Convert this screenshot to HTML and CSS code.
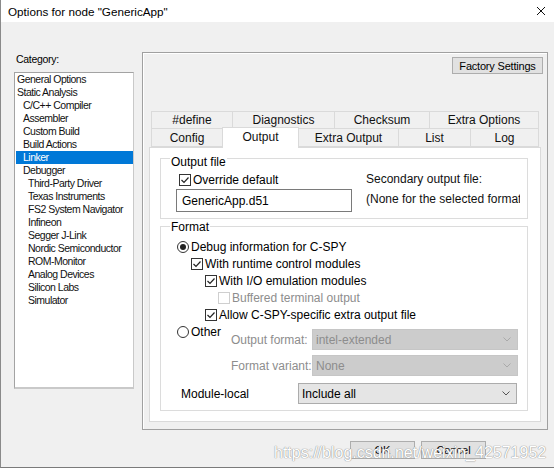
FILE: index.html
```html
<!DOCTYPE html>
<html>
<head>
<meta charset="utf-8">
<link rel="stylesheet" href="styles.css">
</head>
<body>
<div class="window">
  <div class="titlebar">
    <span class="title">Options for node "GenericApp"</span>
    <svg class="close" width="10" height="10" viewBox="0 0 10 10"><path d="M1 1L9 9M9 1L1 9" stroke="#111" stroke-width="1"/></svg>
  </div>
  <div class="client">
    <div class="main">
      <div class="category">
        <div class="cat-label">Category:</div>
        <div class="cat-list">
          <div class="item l0">General Options</div>
          <div class="item l0">Static Analysis</div>
          <div class="item l1">C/C++ Compiler</div>
          <div class="item l1">Assembler</div>
          <div class="item l1">Custom Build</div>
          <div class="item l1">Build Actions</div>
          <div class="item l1 selected">Linker</div>
          <div class="item l1">Debugger</div>
          <div class="item l2">Third-Party Driver</div>
          <div class="item l2">Texas Instruments</div>
          <div class="item l2">FS2 System Navigator</div>
          <div class="item l2">Infineon</div>
          <div class="item l2">Segger J-Link</div>
          <div class="item l2">Nordic Semiconductor</div>
          <div class="item l2">ROM-Monitor</div>
          <div class="item l2">Analog Devices</div>
          <div class="item l2">Silicon Labs</div>
          <div class="item l2">Simulator</div>
        </div>
      </div>
      <div class="panel">
        <div class="panel-top"><div class="btn factory">Factory Settings</div></div>
        <div class="tabs">
          <div class="tab-row row1">
            <div class="tab w-define">#define</div>
            <div class="tab w-diag">Diagnostics</div>
            <div class="tab w-check">Checksum</div>
            <div class="tab w-extra">Extra Options</div>
          </div>
          <div class="tab-row row2">
            <div class="tab w-config">Config</div>
            <div class="tab w-output active">Output</div>
            <div class="tab w-extraout">Extra Output</div>
            <div class="tab w-list">List</div>
            <div class="tab w-log">Log</div>
          </div>
        </div>
        <div class="page">
          <div class="group group-out">
            <div class="legend">Output file</div>
            <div class="out-body">
              <div class="out-left">
                <div class="check-row override">
                  <span class="cb checked"><svg width="10" height="10" viewBox="0 0 10 10"><path d="M1.5 5L4 7.5L8.5 2.5" fill="none" stroke="#222" stroke-width="1.2"/></svg></span>
                  <span>Override default</span>
                </div>
                <div class="textbox">GenericApp.d51</div>
              </div>
              <div class="out-right">
                <div>Secondary output file:</div>
                <div>(None for the selected format)</div>
              </div>
            </div>
          </div>
          <div class="group group-fmt">
            <div class="legend fmt-legend">Format</div>
            <div class="fmt-body">
              <div class="opt lv0">
                <span class="rb on"><span class="dot"></span></span>
                <span>Debug information for C-SPY</span>
              </div>
              <div class="opt lv1">
                <span class="cb checked"><svg width="10" height="10" viewBox="0 0 10 10"><path d="M1.5 5L4 7.5L8.5 2.5" fill="none" stroke="#222" stroke-width="1.2"/></svg></span>
                <span>With runtime control modules</span>
              </div>
              <div class="opt lv2">
                <span class="cb checked"><svg width="10" height="10" viewBox="0 0 10 10"><path d="M1.5 5L4 7.5L8.5 2.5" fill="none" stroke="#222" stroke-width="1.2"/></svg></span>
                <span>With I/O emulation modules</span>
              </div>
              <div class="opt lv3 disabled">
                <span class="cb"></span>
                <span>Buffered terminal output</span>
              </div>
              <div class="opt lv2">
                <span class="cb checked"><svg width="10" height="10" viewBox="0 0 10 10"><path d="M1.5 5L4 7.5L8.5 2.5" fill="none" stroke="#222" stroke-width="1.2"/></svg></span>
                <span>Allow C-SPY-specific extra output file</span>
              </div>
              <div class="other-block">
                <div class="opt lv0 other">
                  <span class="rb"></span>
                  <span>Other</span>
                </div>
                <div class="fmt-grid">
                  <div class="dim">Output format:</div>
                  <div class="select disabled"><span>intel-extended</span><svg width="8" height="5" viewBox="0 0 8 5"><path d="M0.5 0.5L4 4L7.5 0.5" fill="none" stroke="#a9a9a9" stroke-width="1"/></svg></div>
                  <div class="dim">Format variant:</div>
                  <div class="select disabled"><span>None</span><svg width="8" height="5" viewBox="0 0 8 5"><path d="M0.5 0.5L4 4L7.5 0.5" fill="none" stroke="#a9a9a9" stroke-width="1"/></svg></div>
                </div>
              </div>
              <div class="module-row">
                <div class="module-label">Module-local</div>
                <div class="select enabled wide"><span>Include all</span><svg width="8" height="5" viewBox="0 0 8 5"><path d="M0.5 0.5L4 4L7.5 0.5" fill="none" stroke="#555" stroke-width="1"/></svg></div>
              </div>
            </div>
          </div>
        </div>
      </div>
    </div>
    <div class="footer">
      <div class="btn small">OK</div>
      <div class="btn small">Cancel</div>
    </div>
    <div class="watermark">https://blog.csdn.net/weixin_42571952</div>
  </div>
</div>
</body>
</html>
```

FILE: styles.css
```css
* { box-sizing: border-box; }
body {
  margin: 0;
  width: 554px;
  height: 470px;
  background: #fff;
  overflow: hidden;
  font-family: "Liberation Sans", Arial, sans-serif;
  font-size: 12px;
  color: #000;
}
.window {
  width: 554px;
  height: 468px;
  border-left: 1px solid #8a8a8a;
  border-bottom: 1px solid #7a7a7a;
}
.titlebar {
  height: 22px;
  background: #fff;
  display: flex;
  align-items: center;
  justify-content: space-between;
  padding: 0 8px 0 7px;
}
.title { font-size: 11.7px; color: #000; }
.client {
  position: relative;
  height: 445px;
  background: #f0f0f0;
  padding-left: 13px;
}
.main { display: flex; align-items: flex-start; }
.category { width: 120px; margin-top: 31px; }
.cat-label {
  font-size: 10.5px;
  letter-spacing: -0.3px;
  line-height: 13px;
  height: 13px;
  padding-left: 2px;
}
.cat-list {
  margin-top: 6px;
  height: 317px;
  background: #fff;
  border: 1px solid #a3a3a3;
  border-right-color: #c9c9c9;
  border-bottom: 2px solid #c9c9c9;
}
.item {
  height: 13px;
  line-height: 13px;
  font-size: 10.5px;
  letter-spacing: -0.5px;
  white-space: nowrap;
  color: #111;
}
.l0 { padding-left: 2px; }
.l1 { padding-left: 8px; }
.l2 { padding-left: 13px; }
.item.selected {
  background: #0078d7;
  color: #fff;
  margin-left: 1px;
  padding-left: 7px;
}
.panel {
  margin-left: 8px;
  margin-top: 30px;
  width: 406px;
  height: 378px;
  border: 1px solid #a0a0a0;
  box-shadow: inset 1px 1px 0 #fff;
}
.panel-top { display: flex; justify-content: flex-end; padding: 4px 4px 0 0; }
.btn {
  background: #e1e1e1;
  border: 1px solid #adadad;
  display: flex;
  align-items: center;
  justify-content: center;
  font-size: 11px;
  color: #000;
}
.factory { width: 91px; height: 17px; letter-spacing: -0.2px; }
.tabs { margin-top: 37px; margin-left: 8px; }
.tab-row { display: flex; height: 18px; }
.tab-row.row2 { height: 19px; margin-top: -1px; }
.tab {
  border: 1px solid #dadada;
  margin-left: -1px;
  display: flex;
  align-items: center;
  justify-content: center;
  font-size: 12px;
  color: #111;
  background: #f0f0f0;
}
.tab:first-child { margin-left: 0; }
.w-define { width: 82px; }
.w-diag { width: 103px; }
.w-check { width: 96px; }
.w-extra { width: 110px; }
.w-config { width: 72px; }
.w-output { width: 77px; }
.w-extraout { width: 101px; }
.w-list { width: 73px; }
.w-log { width: 69px; }
.tab.active {
  background: #fff;
  height: 21px;
  align-self: flex-end;
  position: relative;
  top: 1px;
  z-index: 1;
  border-bottom: none;
  padding-bottom: 3px;
}
.page {
  margin-left: 6px;
  width: 392px;
  height: 275px;
  background: #fff;
  border: 1px solid #dadada;
  padding: 10px 0 0 10px;
}
.group {
  width: 368px;
  border: 1px solid #dcdcdc;
}
.group-out { height: 61px; }
.group-fmt { height: 185px; margin-top: 7px; }
.legend {
  margin: -4px 0 0 9px;
  padding: 0 1px;
  background: #fff;
  width: fit-content;
  line-height: 14px;
  height: 14px;
}
.legend.fmt-legend { margin-top: -7px; }
.out-body {
  display: grid;
  grid-template-columns: 176px 1fr;
  column-gap: 14px;
  padding: 0 7px 0 15px;
}
.check-row {
  display: flex;
  align-items: center;
  gap: 2px;
  height: 15px;
  margin-top: 3px;
  margin-left: 3px;
}
.cb {
  width: 12px;
  height: 12px;
  border: 1px solid #333;
  background: #fff;
  display: flex;
  align-items: center;
  justify-content: center;
  flex: none;
}
.rb {
  width: 12px;
  height: 12px;
  border: 1px solid #333;
  border-radius: 50%;
  background: #fff;
  display: flex;
  align-items: center;
  justify-content: center;
  flex: none;
}
.rb .dot { width: 6px; height: 6px; border-radius: 50%; background: #222; }
.textbox {
  margin-top: 2px;
  height: 23px;
  border: 1px solid #7a7a7a;
  display: flex;
  align-items: center;
  padding-left: 5px;
}
.out-right {
  line-height: 20px;
  white-space: nowrap;
  overflow: hidden;
  color: #111;
}
.fmt-body { padding-top: 4px; }
.opt {
  display: flex;
  align-items: center;
  gap: 2px;
  height: 17px;
  white-space: nowrap;
}
.lv0 { padding-left: 16px; }
.lv1 { padding-left: 30px; }
.lv2 { padding-left: 44px; }
.lv3 { padding-left: 57px; }
.opt.disabled { color: #8d8d8d; }
.opt.disabled .cb { border-color: #cfcfcf; }
.other-block { display: flex; align-items: flex-start; }
.opt.other { width: 70px; }
.fmt-grid {
  margin-top: 6px;
  display: grid;
  grid-template-columns: 81px 206px;
  row-gap: 5px;
  align-items: center;
}
.dim { color: #8d8d8d; }
.select {
  height: 21px;
  border: 1px solid #adadad;
  display: flex;
  align-items: center;
  justify-content: space-between;
  padding: 0 6px 0 3px;
}
.select.disabled { background: #cccccc; border-color: #c6c6c6; color: #8d8d8d; }
.select.enabled { background: #e5e5e5; border-color: #acacac; }
.module-row {
  display: flex;
  align-items: center;
  margin-top: 7px;
  padding-left: 20px;
}
.module-label { width: 117px; }
.select.wide { width: 219px; }
.footer {
  display: flex;
  justify-content: flex-end;
  gap: 6px;
  margin-top: 11px;
  padding-right: 68px;
}
.btn.small { width: 65px; height: 18px; }
.watermark {
  position: absolute;
  left: 273px;
  top: 421px;
  font-family: "Liberation Sans", Arial, sans-serif;
  font-size: 16px;
  line-height: 20px;
  color: #fff;
  text-shadow: 0 0 1px #8c8c8c, 0 0 1px #8c8c8c;
  white-space: nowrap;
}
```
